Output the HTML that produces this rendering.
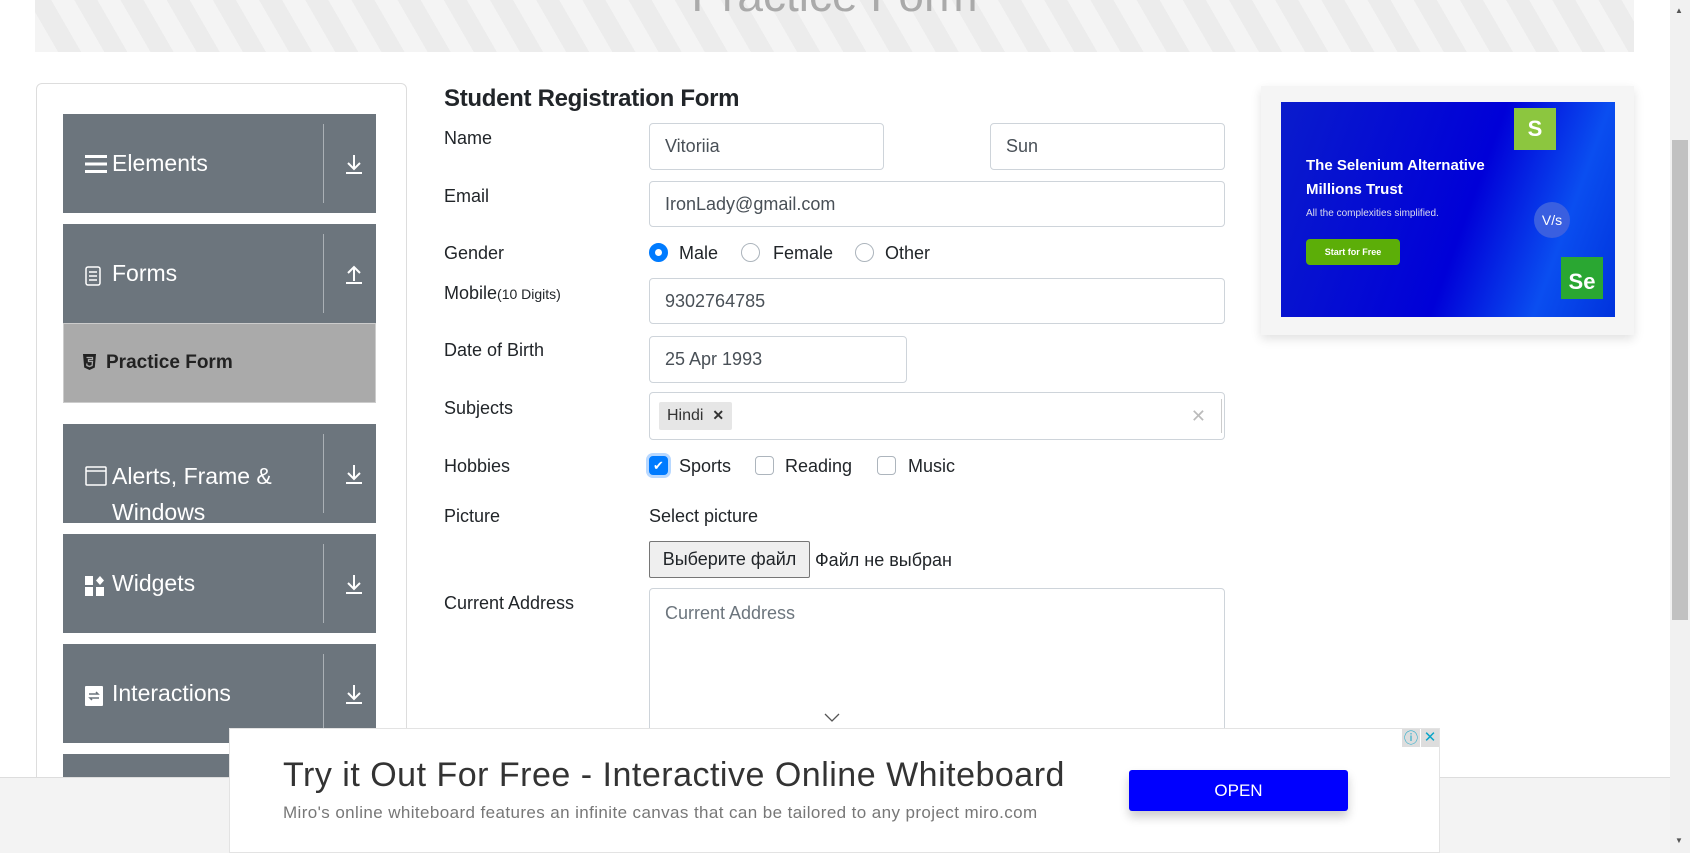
<!DOCTYPE html>
<html><head><meta charset="utf-8"><style>
*{box-sizing:border-box;margin:0;padding:0}
body{width:1690px;height:853px;overflow:hidden;background:#fff;font-family:"Liberation Sans","Noto Sans CJK SC",sans-serif;color:#212529;position:relative}
.abs{position:absolute}
.banner{left:35px;top:0;width:1599px;height:52px;background:repeating-linear-gradient(60deg,#f4f4f4 0 20px,#ececec 20px 40px);}
.banner span{position:absolute;left:0;right:0;top:-32px;text-align:center;font-size:46px;color:#aaa}
.panel{left:36px;top:83px;width:371px;height:720px;border:1px solid #ddd;border-radius:6px}
.mi{position:absolute;left:63px;width:313px;background:#6c757d;color:#fff;font-size:23px}
.mi .t{position:absolute;left:49px}
.mi .ic{position:absolute;left:22px}
.mi .dv{position:absolute;left:260px;top:10px;bottom:10px;border-left:1px solid #aab0b5}
.mi svg.ar{position:absolute;left:281px;top:40px}
.lbl{position:absolute;left:444px;font-size:18px}
.inp{position:absolute;border:1px solid #ced4da;border-radius:4px;font-size:18px;color:#495057;padding-left:15px;display:flex;align-items:center}
.txt{position:absolute;font-size:18px}
.rad{position:absolute;width:19px;height:19px;border:1px solid #adb5bd;border-radius:50%;background:#fff}
.cb{position:absolute;width:19px;height:19px;border:1px solid #adb5bd;border-radius:4px;background:#fff}
</style></head><body>
<div class="abs banner"><span>Practice Form</span></div>
<div class="abs panel"></div>

<div class="mi" style="top:114px;height:99px"><svg class="ic" style="top:40px" width="22" height="20" viewBox="0 0 22 20"><rect y="1" width="22" height="3" fill="#fff"/><rect y="8.5" width="22" height="3" fill="#fff"/><rect y="16" width="22" height="3" fill="#fff"/></svg><span class="t" style="top:36px">Elements</span><div class="dv"></div><svg class="ar" width="20" height="20" viewBox="0 0 20 20" fill="none" stroke="#fff" stroke-width="2"><path d="M10 1v14M4 9l6 6 6-6M2 19h16"/></svg></div>
<div class="mi" style="top:224px;height:99px"><svg class="ic" style="top:42px" width="16" height="20" viewBox="0 0 16 20" fill="none" stroke="#fff" stroke-width="1.5"><rect x="1" y="1" width="14" height="18" rx="2"/><path d="M4 6h8M4 10h8M4 14h8"/></svg><span class="t" style="top:36px">Forms</span><div class="dv"></div><svg class="ar" width="20" height="20" viewBox="0 0 20 20" fill="none" stroke="#fff" stroke-width="2"><path d="M10 17V3M4 9l6-6 6 6M2 19h16"/></svg></div>
<div class="mi" style="top:323px;height:80px;background:#aaa;color:#222;font-size:19px;font-weight:bold;border:1px solid #ccc"><svg class="ic" style="top:30px;left:19px" width="13" height="16" viewBox="0 0 13 16"><path d="M0 0h13l-1.2 13.5L6.5 16 1.2 13.5z" fill="#222"/><path d="M3.5 3.5h6v2H5.5v2h4l-.4 4-2.6 1-2.6-1-.1-2" fill="none" stroke="#aaa" stroke-width="1.3"/></svg><span class="t" style="top:28px;left:42px">Practice Form</span></div>
<div class="mi" style="top:424px;height:99px"><svg class="ic" style="top:42px" width="22" height="20" viewBox="0 0 22 20" fill="none" stroke="#fff" stroke-width="1.5"><rect x="1" y="1" width="20" height="18" rx="1"/><path d="M1 5h20"/></svg><span class="t" style="top:34px;line-height:36px">Alerts, Frame &amp;<br>Windows</span><div class="dv"></div><svg class="ar" width="20" height="20" viewBox="0 0 20 20" fill="none" stroke="#fff" stroke-width="2"><path d="M10 1v14M4 9l6 6 6-6M2 19h16"/></svg></div>
<div class="mi" style="top:534px;height:99px"><svg class="ic" style="top:42px" width="20" height="20" viewBox="0 0 20 20" fill="#fff"><rect x="0" y="0" width="8" height="9"/><rect x="0" y="11" width="8" height="9"/><rect x="11" y="11" width="8" height="9"/><path d="M15 0l4 4.5-4 4.5-4-4.5z"/></svg><span class="t" style="top:36px">Widgets</span><div class="dv"></div><svg class="ar" width="20" height="20" viewBox="0 0 20 20" fill="none" stroke="#fff" stroke-width="2"><path d="M10 1v14M4 9l6 6 6-6M2 19h16"/></svg></div>
<div class="mi" style="top:644px;height:99px"><svg class="ic" style="top:42px" width="18" height="20" viewBox="0 0 18 20"><rect width="18" height="20" rx="1" fill="#fff"/><path d="M4 8h9l-2-2M14 12H5l2 2" fill="none" stroke="#6c757d" stroke-width="1.5"/></svg><span class="t" style="top:36px">Interactions</span><div class="dv"></div><svg class="ar" width="20" height="20" viewBox="0 0 20 20" fill="none" stroke="#fff" stroke-width="2"><path d="M10 1v14M4 9l6 6 6-6M2 19h16"/></svg></div>
<div class="mi" style="top:754px;height:60px"></div>

<div class="abs" style="left:444px;top:85px;font-size:24px;font-weight:bold;letter-spacing:-0.3px">Student Registration Form</div>
<div class="lbl" style="top:128px">Name</div>
<div class="lbl" style="top:186px">Email</div>
<div class="lbl" style="top:243px">Gender</div>
<div class="lbl" style="top:283px">Mobile<span style="font-size:14px">(10 Digits)</span></div>
<div class="lbl" style="top:340px">Date of Birth</div>
<div class="lbl" style="top:398px">Subjects</div>
<div class="lbl" style="top:456px">Hobbies</div>
<div class="lbl" style="top:506px">Picture</div>
<div class="lbl" style="top:593px">Current Address</div>

<div class="inp" style="left:649px;top:123px;width:235px;height:47px">Vitoriia</div>
<div class="inp" style="left:990px;top:123px;width:235px;height:47px">Sun</div>
<div class="inp" style="left:649px;top:181px;width:576px;height:46px">IronLady@gmail.com</div>
<div class="rad" style="left:649px;top:243px;border:6px solid #007bff"></div><div class="txt" style="left:679px;top:243px">Male</div>
<div class="rad" style="left:741px;top:243px"></div><div class="txt" style="left:773px;top:243px">Female</div>
<div class="rad" style="left:855px;top:243px"></div><div class="txt" style="left:885px;top:243px">Other</div>
<div class="inp" style="left:649px;top:278px;width:576px;height:46px">9302764785</div>
<div class="inp" style="left:649px;top:336px;width:258px;height:47px">25 Apr 1993</div>
<div class="inp" style="left:649px;top:392px;width:576px;height:48px;padding-left:9px"><span style="background:#e6e6e6;border-radius:2px;padding:5px 8px;font-size:16px;color:#333">Hindi &nbsp;<b style="font-size:14px">✕</b></span><span style="position:absolute;right:18px;color:#bbb;font-size:18px">✕</span><span style="position:absolute;right:2px;top:6px;bottom:6px;border-left:1px solid #ccc"></span></div>
<div class="cb" style="left:649px;top:456px;background:#007bff;border-color:#007bff;color:#fff;font-size:13px;text-align:center;line-height:17px;box-shadow:0 0 0 3px #b8d8ff">✔</div><div class="txt" style="left:679px;top:456px">Sports</div>
<div class="cb" style="left:755px;top:456px"></div><div class="txt" style="left:785px;top:456px">Reading</div>
<div class="cb" style="left:877px;top:456px"></div><div class="txt" style="left:908px;top:456px">Music</div>
<div class="txt" style="left:649px;top:506px">Select picture</div>
<div class="abs" style="left:649px;top:541px;width:161px;height:37px;border:1px solid #767676;background:#efefef;border-radius:2px;font-size:18px;text-align:center;line-height:35px">Выберите файл</div>
<div class="txt" style="left:815px;top:550px">Файл не выбран</div>
<div class="inp" style="left:649px;top:588px;width:576px;height:200px;align-items:flex-start;padding-top:14px;color:#6c757d">Current Address</div>
<svg class="abs" style="left:824px;top:713px" width="16" height="10" viewBox="0 0 16 10" fill="none" stroke="#555" stroke-width="1.3"><path d="M1 1l7 7 7-7"/></svg>

<div class="abs" style="left:1261px;top:86px;width:373px;height:249px;background:#f5f5f5;box-shadow:0 4px 10px rgba(0,0,0,.12)"></div>
<div class="abs" style="left:1281px;top:102px;width:334px;height:215px;background:linear-gradient(110deg,#0a1ccc 0%,#0000d8 55%,#0a4ef0 80%,#0033dd 100%);overflow:hidden">
<div class="abs" style="left:25px;top:52px;color:#fff;font-weight:bold;font-size:15px;line-height:24px">The Selenium Alternative<br>Millions Trust</div>
<div class="abs" style="left:25px;top:106px;color:#dde;font-size:10px">All the complexities simplified.</div>
<div class="abs" style="left:25px;top:137px;width:94px;height:26px;background:#5cae08;border-radius:4px;color:#fff;font-size:9px;font-weight:bold;text-align:center;line-height:26px">Start for Free</div>
<div class="abs" style="left:233px;top:6px;width:42px;height:42px;background:#8cc63f;color:#fff;font-weight:bold;font-size:22px;text-align:center;line-height:42px">S</div>
<div class="abs" style="left:280px;top:155px;width:42px;height:42px;background:#2aa732;color:#fff;font-weight:bold;font-size:22px;text-align:center;line-height:50px">Se</div>
<div class="abs" style="left:253px;top:100px;width:36px;height:36px;border-radius:50%;background:#3a5fe0;color:#fff;font-size:14px;text-align:center;line-height:36px">V/s</div>
</div>

<div class="abs" style="left:0;top:777px;width:1670px;height:76px;background:#f3f3f3;border-top:1px solid #ddd"></div>
<div class="abs" style="left:229px;top:728px;width:1211px;height:125px;background:#fff;border:1px solid #e3e3e3">
<div class="abs" style="left:53px;top:27px;font-size:34px;letter-spacing:0.5px;color:#333">Try it Out For Free - Interactive Online Whiteboard</div>
<div class="abs" style="left:53px;top:74px;font-size:17px;letter-spacing:0.4px;color:#777">Miro's online whiteboard features an infinite canvas that can be tailored to any project miro.com</div>
<div class="abs" style="left:899px;top:41px;width:219px;height:41px;background:#0000ff;border-radius:3px;color:#fff;font-size:17px;text-align:center;line-height:41px;box-shadow:0 6px 10px rgba(0,0,0,.2)">OPEN</div>
<div class="abs" style="left:1172px;top:0;width:18px;height:18px;background:#ddd;color:#0aa5c8;font-size:14px;text-align:center;line-height:18px">ⓘ</div>
<div class="abs" style="left:1191px;top:0;width:18px;height:18px;background:#ddd;color:#0aa5c8;font-size:15px;text-align:center;line-height:18px">✕</div>
</div>

<div class="abs" style="left:1670px;top:0;width:20px;height:853px;background:#f1f1f1"></div>
<div class="abs" style="left:1672px;top:140px;width:16px;height:480px;background:#c1c1c1"></div>
<div class="abs" style="left:1675px;top:6px;font-size:8px;color:#555">▲</div>
<div class="abs" style="left:1675px;top:836px;font-size:8px;color:#555">▼</div>
</body></html>
